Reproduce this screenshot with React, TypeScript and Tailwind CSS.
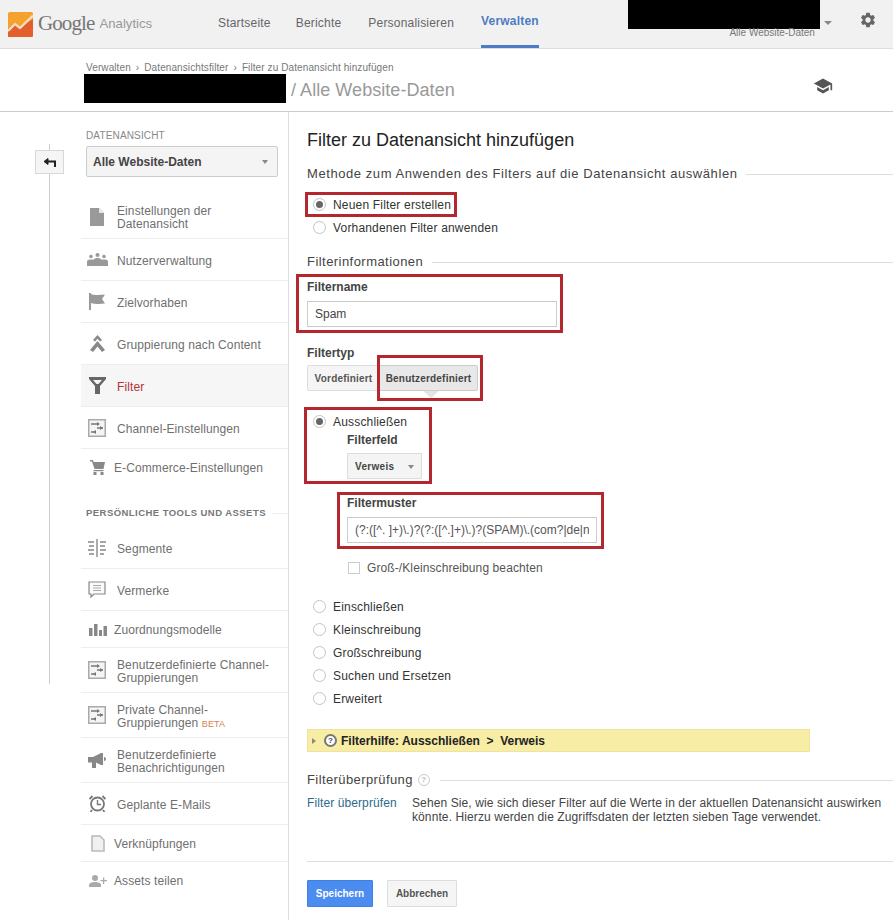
import type { ReactNode } from "react";
import { MdSettings, MdSchool } from "react-icons/md";

const FileIcon = () => (
  <svg width="14" height="18" viewBox="0 0 14 18" fill="#999">
    <path d="M0 0h9l5 5v13H0z" />
    <path d="M9 0v5h5z" fill="#e8e8e8" />
  </svg>
);

const PeopleIcon = () => (
  <svg width="21" height="13" viewBox="0 0 21 13" fill="#999">
    <circle cx="4" cy="3.500" r="1.800" />
    <circle cx="10.500" cy="2" r="2" />
    <circle cx="17" cy="3.500" r="1.800" />
    <path d="M0 13V8.500C0 7 2 6.500 4 6.500c.8 0 1.500.1 2.200.3C7 5.600 9 5 10.500 5s3.500.6 4.300 1.800c.7-.2 1.400-.3 2.200-.3 2 0 4 .5 4 2V13z" />
  </svg>
);

const FlagIcon = () => (
  <svg width="16" height="17" viewBox="0 0 16 17" fill="#999">
    <rect x="0" y="0" width="2" height="17" />
    <path d="M2 1c3 1.200 6 1.200 14 .5L13 6l3 4.500c-6 .8-10 .5-14-.5z" />
  </svg>
);

const MergeIcon = () => (
  <svg width="15" height="17" viewBox="0 0 15 17" fill="#888">
    <path d="M7.500 0L12 5l-2 1.500-2.500-2.800L5 6.500 3 5z" />
    <path d="M7.500 6L15 15l-3 2-4.500-5.500L3 17l-3-2z" />
  </svg>
);

const FunnelIcon = () => (
  <svg width="17" height="17" viewBox="0 0 17 17" fill="#666">
    <path fillRule="evenodd" d="M0 0h17v2l-6 7v8H6V9L0 2zm4 3l3.500 4h2L13 3z" />
  </svg>
);

const ChannelIcon = () => (
  <svg width="18" height="18" viewBox="0 0 18 18" fill="none">
    <rect x="0.750" y="0.750" width="16.500" height="16.500" fill="#f4f4f4" stroke="#aaa" strokeWidth="1.500" />
    <path d="M3 5h6M3 13h5M9 9h6" stroke="#777" strokeWidth="1.300" />
    <path d="M9 3l3 2-3 2zM12 7l3 2-3 2zM8 11l-3 2 3 2z" fill="#777" />
  </svg>
);

const CartIcon = () => (
  <svg width="15" height="15" viewBox="0 0 15 15" fill="#888">
    <path d="M0 0h3l.6 2H15l-1.500 7H4.500L2 1.500H0z" />
    <rect x="3.500" y="10" width="10" height="1.200" />
    <rect x="3.500" y="12" width="3" height="3" />
    <rect x="10.500" y="12" width="3" height="3" />
  </svg>
);

const SegmentIcon = () => (
  <svg width="18" height="18" viewBox="0 0 18 18" fill="none" stroke="#888" strokeWidth="1.400">
    <path d="M9 0v18" />
    <path d="M0 3h6M1 7h5M0 11h6M1 15h5M12 3h6M12 7h5M12 11h6M12 15h4" />
  </svg>
);

const CommentIcon = () => (
  <svg width="18" height="18" viewBox="0 0 18 18" fill="none">
    <path d="M1 1h16v12H6l-3 3v-3H1z" fill="#fafafa" stroke="#888" strokeWidth="1.200" />
    <path d="M5 4.500h8M5 7h8M5 9.500h8" stroke="#aaa" strokeWidth="1" />
  </svg>
);

const BarsIcon = () => (
  <svg width="18" height="14" viewBox="0 0 18 14" fill="#888">
    <rect x="0" y="6" width="3.500" height="8" />
    <rect x="5" y="2" width="3.500" height="12" />
    <rect x="10" y="8" width="3" height="6" />
    <rect x="14.500" y="4" width="3.500" height="10" />
  </svg>
);

const HornIcon = () => (
  <svg width="18" height="15" viewBox="0 0 18 15" fill="#888">
    <path d="M0 4h5l8-4h2v12h-2L8 9.500V15H4V9.500H0z" />
    <path d="M16 4c1.300 0 2 1 2 2s-.7 2-2 2z" />
  </svg>
);

const ClockIcon = () => (
  <svg width="17" height="17" viewBox="0 0 17 17" fill="none" stroke="#777">
    <circle cx="8.500" cy="9" r="6.500" strokeWidth="1.800" />
    <path d="M8.500 5v4.500H12" strokeWidth="1.400" />
    <path d="M0.500 4l3-3M16.500 4l-3-3M3 15l-1.500 2M14 15l1.500 2" strokeWidth="1.800" />
  </svg>
);

const PageIcon = () => (
  <svg width="14" height="17" viewBox="0 0 14 17" fill="#f0f0f0" stroke="#bbb" strokeWidth="1.600">
    <path d="M1 1h8l4 4v11H1z" />
  </svg>
);

const AddUserIcon = () => (
  <svg width="18" height="12" viewBox="0 0 18 12" fill="#aaa">
    <circle cx="6" cy="3" r="3" />
    <path d="M0 12v-2c0-2 3-3 6-3s6 1 6 3v2z" />
    <path d="M14 2.500h1.300v2.500H18v1.300h-2.700V9H14V6.300h-2.500V5H14z" />
  </svg>
);

const BackIcon = () => (
  <svg width="13" height="9" viewBox="0 0 13 9" fill="none" stroke="#222" strokeWidth="2">
    <path d="M12 9V3.500H3" />
    <path d="M5 0.500L1 3.500l4 3z" fill="#222" strokeWidth="1" />
  </svg>
);

const Logo = () => (
  <svg width="25" height="25" viewBox="0 0 25 25">
    <rect x="0" y="0" width="25" height="25" rx="1.500" fill="#f4a22d" />
    <path d="M0 25V17l7-6 5 4L25 7v16.500a1.500 1.500 0 0 1-1.500 1.500z" fill="#e2602c" />
    <path d="M0 19l7-7 5 4L25 3.500" fill="none" stroke="#f6dcc0" strokeWidth="2.400" />
  </svg>
);

const HelpDot = ({ light }: { light?: boolean }) => (
  <span
    className={
      light
        ? "flex h-[12px] w-[12px] items-center justify-center rounded-full border border-[#ccc] text-[8px] font-bold text-[#bbb]"
        : "flex h-[13px] w-[13px] items-center justify-center rounded-full border-2 border-[#777] bg-white text-[8px] font-bold text-[#444]"
    }
  >
    ?
  </span>
);

const Row = ({
  h,
  icon,
  border = true,
  narrow,
  active,
  children,
}: {
  h: string;
  icon: ReactNode;
  border?: boolean;
  narrow?: boolean;
  active?: boolean;
  children: ReactNode;
}) => (
  <div
    className={`flex items-center ${h} ${border ? "border-b border-[#eee]" : ""} ${active ? "bg-[#f6f6f6] text-[#b5323a]" : "text-[#6f6f6f]"}`}
  >
    <span className={`flex shrink-0 justify-center ${narrow ? "w-[33px]" : "w-[36px] pr-[4px]"}`}>{icon}</span>
    <span className={`text-[12px] leading-[13px] tracking-[0.1px] ${narrow ? "pt-[2px]" : "pt-[4px]"}`}>{children}</span>
  </div>
);

const Radio = ({ checked, label }: { checked?: boolean; label: string }) => (
  <div className="flex h-[23px] items-center pl-[6px] text-[12px] tracking-[0.18px] text-[#333]">
    <span className="flex h-[13px] w-[13px] items-center justify-center rounded-full border border-[#c4c4c4] bg-white">
      {checked && <span className="h-[7px] w-[7px] rounded-full bg-[#666]" />}
    </span>
    <span className="ml-[7px]">{label}</span>
  </div>
);

const RedBox = ({ className }: { className: string }) => (
  <div className={`pointer-events-none absolute border-[3px] border-[#b4272f] ${className}`} />
);

export default function App() {
  return (
    <div className="relative h-[920px] w-[893px] overflow-hidden bg-white font-['Liberation_Sans',Arial,sans-serif] text-[#333]">
      {/* header */}
      <header className="flex h-[49px] items-start border-b border-[#ddd] bg-[#f1f1f1]">
        <div className="flex h-[48px] w-[218px] items-center pl-[8px]">
          <Logo />
          <span className="ml-[5px] font-['Liberation_Serif',serif] text-[21px] tracking-[-0.9px] text-[#777]">Google</span>
          <span className="ml-[5px] text-[13.200px] text-[#999]">Analytics</span>
        </div>
        <nav className="flex h-[48px] gap-[27px] text-[12px] tracking-[0.2px] text-[#666]">
          <a className="-mr-[2px] flex items-center pb-[3px]">Startseite</a>
          <a className="flex items-center pb-[3px]">Berichte</a>
          <a className="flex items-center pb-[3px]">Personalisieren</a>
          <a className="flex items-center border-b-[3px] border-[#4d7cc4] pb-[3px] font-bold text-[#4d7cc4]">Verwalten</a>
        </nav>
        <div className="ml-[89px] w-[192px]">
          <div className="h-[29px] bg-black" />
          <div className="pr-[5px] pt-[1px] text-right text-[10px] leading-[6px] text-[#777]">Alle Website-Daten</div>
        </div>
        <span className="ml-[4px] mt-[21px] h-0 w-0 border-x-[4px] border-t-[4px] border-x-transparent border-t-[#888]" />
        <MdSettings className="ml-[27px] mt-[11px] text-[#666]" size={18} />
      </header>

      {/* breadcrumb */}
      <div className="flex h-[63px] border-b border-[#ccc] pl-[84px]">
        <div className="flex-1">
          <div className="mt-[13px] flex h-[10px] items-center gap-[5px] pl-[2px] text-[10px] tracking-[0.1px] text-[#777]">
            <span>Verwalten</span>
            <span>›</span>
            <span>Datenansichtsfilter</span>
            <span>›</span>
            <span>Filter zu Datenansicht hinzufügen</span>
          </div>
          <div className="flex items-center">
            <div className="h-[29px] w-[202px] bg-black" />
            <span className="ml-[5px] pt-[5px] text-[18px] tracking-[0.05px] text-[#999]">/ Alle Website-Daten</span>
          </div>
        </div>
        <MdSchool className="mr-[60px] mt-[27px] text-[#555]" size={20} />
      </div>

      <div className="flex">
        {/* back rail */}
        <div className="relative w-[81px] shrink-0">
          <div className="ml-[49px] mt-[32px] h-[540px] w-px bg-[#ccc]" />
          <button className="absolute left-[35px] top-[38px] flex h-[24px] w-[29px] items-center justify-center border border-[#d8d8d8] bg-[#f5f5f5]">
            <BackIcon />
          </button>
        </div>

        {/* sidebar */}
        <aside className="h-[808px] w-[208px] shrink-0 border-r border-[#ddd]">
          <div className="ml-[5px] mt-[18px] h-[12px] text-[10px] leading-[12px] tracking-[0.15px] text-[#888]">DATENANSICHT</div>
          <div className="ml-[5px] mt-[4px] flex h-[31px] w-[192px] items-center justify-between rounded-[2px] border border-[#ccc] bg-[#f4f4f4] pl-[6px] pr-[9px] text-[12px] font-bold text-[#444]">
            <span>Alle Website-Daten</span>
            <span className="h-0 w-0 border-x-[3.500px] border-t-[4px] border-x-transparent border-t-[#888]" />
          </div>
          <div className="mt-[18px]">
            <Row h="h-[44px]" icon={<FileIcon />}>
              <span className="-mt-[2px] block">
                Einstellungen der
                <br />
                Datenansicht
              </span>
            </Row>
            <Row h="h-[42px]" icon={<PeopleIcon />}>Nutzerverwaltung</Row>
            <Row h="h-[42px]" icon={<FlagIcon />}>Zielvorhaben</Row>
            <Row h="h-[42px]" icon={<MergeIcon />}>Gruppierung nach Content</Row>
            <Row h="h-[42px]" active icon={<FunnelIcon />}>Filter</Row>
            <Row h="h-[42px]" icon={<ChannelIcon />}>Channel-Einstellungen</Row>
            <Row h="h-[36px]" border={false} narrow icon={<CartIcon />}>E-Commerce-Einstellungen</Row>
            <div className="mt-[19px] flex h-[18px] items-center pl-[5px] text-[9.500px] font-bold tracking-[0.45px] text-[#777]">
              <span className="whitespace-nowrap">PERSÖNLICHE TOOLS UND ASSETS</span>
              <span className="ml-[6px] h-px flex-1 bg-[#eee]" />
            </div>
            <div className="mt-[5px]">
              <Row h="h-[42px]" icon={<SegmentIcon />}>Segmente</Row>
              <Row h="h-[42px]" icon={<CommentIcon />}>Vermerke</Row>
              <Row h="h-[37px]" narrow icon={<BarsIcon />}>Zuordnungsmodelle</Row>
              <Row h="h-[45px]" icon={<ChannelIcon />}>
                Benutzerdefinierte Channel-
                <br />
                Gruppierungen
              </Row>
              <Row h="h-[45px]" icon={<ChannelIcon />}>
                Private Channel-
                <br />
                Gruppierungen <span className="text-[9px] text-[#d9824a]">BETA</span>
              </Row>
              <Row h="h-[45px]" icon={<HornIcon />}>
                Benutzerdefinierte
                <br />
                Benachrichtigungen
              </Row>
              <Row h="h-[42px]" icon={<ClockIcon />}>Geplante E-Mails</Row>
              <Row h="h-[37px]" narrow icon={<PageIcon />}>Verknüpfungen</Row>
              <Row h="h-[37px]" border={false} narrow icon={<AddUserIcon />}>Assets teilen</Row>
            </div>
          </div>
        </aside>

        {/* main */}
        <main className="relative w-[604px] pl-[18px]">
          <h1 className="mt-[16px] text-[18px] leading-[24px] text-[#222]">Filter zu Datenansicht hinzufügen</h1>
          <div className="mt-[14px] flex h-[16px] items-center text-[13px] tracking-[0.57px] text-[#444]">
            <span className="whitespace-nowrap">Methode zum Anwenden des Filters auf die Datenansicht auswählen</span>
            <span className="ml-[9px] h-px flex-1 bg-[#ddd]" />
          </div>
          <div className="mt-[11px]">
            <Radio checked label="Neuen Filter erstellen" />
            <Radio label="Vorhandenen Filter anwenden" />
          </div>
          <div className="mt-[15px] flex h-[16px] items-center text-[13px] tracking-[0.45px] text-[#444]">
            <span>Filterinformationen</span>
            <span className="ml-[9px] h-px flex-1 bg-[#ddd]" />
          </div>
          <div className="mt-[9px] h-[16px] text-[12px] font-bold leading-[16px] text-[#444]">Filtername</div>
          <input
            readOnly
            value="Spam"
            className="mt-[6px] block h-[26px] w-[250px] border border-[#ccc] bg-white pl-[7px] text-[12px] text-[#444] outline-none"
          />

          <div className="mt-[18px] h-[16px] text-[12px] font-bold leading-[16px] text-[#444]">Filtertyp</div>
          <div className="mt-[4px] flex">
            <button className="h-[26px] w-[73px] rounded-l-[2px] border border-[#ddd] bg-[#f5f5f5] text-[10px] font-bold tracking-[0.2px] text-[#555]">
              Vordefiniert
            </button>
            <button className="relative h-[26px] w-[98px] rounded-r-[2px] border border-l-0 border-[#ccc] bg-[#e8e8e8] text-[10px] font-bold tracking-[0.2px] text-[#444]">
              Benutzerdefiniert
              <span className="absolute left-[43px] top-[25px] h-0 w-0 border-x-[8px] border-t-[7px] border-x-transparent border-t-[#e4e4e4]" />
            </button>
          </div>

          <div className="mt-[19px]">
            <Radio checked label="Ausschließen" />
          </div>
          <div className="ml-[40px] h-[14px] text-[12px] font-bold leading-[14px] text-[#444]">Filterfeld</div>
          <div className="ml-[40px] mt-[6px] flex h-[26px] w-[75px] items-center justify-between border border-[#ddd] bg-[#f4f4f4] pl-[7px] pr-[7px] text-[10px] font-bold tracking-[0.3px] text-[#444]">
            <span>Verweis</span>
            <span className="mt-[2px] h-0 w-0 border-x-[3.500px] border-t-[4px] border-x-transparent border-t-[#888]" />
          </div>
          <div className="ml-[40px] mt-[16px] h-[16px] text-[12px] font-bold leading-[16px] text-[#444]">Filtermuster</div>
          <input
            readOnly
            value="(?:([^. ]+)\.)?(?:([^.]+)\.)?(SPAM)\.(com?|de|net|org)"
            className="ml-[40px] mt-[6px] block h-[26px] w-[250px] border border-[#ccc] bg-white px-[7px] text-[12px] text-[#555] outline-none"
          />
          <div className="ml-[41px] mt-[17px] flex h-[16px] items-center text-[12px] tracking-[0.1px] text-[#555]">
            <span className="h-[12px] w-[12px] border border-[#ccc] bg-white" />
            <span className="ml-[7px]">Groß-/Kleinschreibung beachten</span>
          </div>

          <div className="mt-[19px]">
            <Radio label="Einschließen" />
            <Radio label="Kleinschreibung" />
            <Radio label="Großschreibung" />
            <Radio label="Suchen und Ersetzen" />
            <Radio label="Erweitert" />
          </div>

          <div className="mt-[19px] flex h-[23px] w-[503px] items-center border border-[#eee3a0] bg-[#f7eda5] pl-[4px] text-[12px] font-bold text-[#222]">
            <span className="h-0 w-0 border-y-[3px] border-l-[4px] border-y-transparent border-l-[#888]" />
            <span className="ml-[8px] mr-[4px]">
              <HelpDot />
            </span>
            <span>Filterhilfe: Ausschließen &nbsp;&gt;&nbsp; Verweis</span>
          </div>

          <div className="mt-[20px] flex h-[16px] items-center text-[13px] tracking-[0.4px] text-[#444]">
            <span>Filterüberprüfung</span>
            <span className="ml-[5px]">
              <HelpDot light />
            </span>
            <span className="ml-[10px] h-px flex-1 bg-[#ddd]" />
          </div>
          <div className="mt-[8px] flex text-[12px] leading-[14px] tracking-[0.1px]">
            <a className="w-[105px] shrink-0 text-[#2c6a8c]">Filter überprüfen</a>
            <p className="whitespace-nowrap text-[#444]">
              Sehen Sie, wie sich dieser Filter auf die Werte in der aktuellen Datenansicht auswirken
              <br />
              könnte. Hierzu werden die Zugriffsdaten der letzten sieben Tage verwendet.
            </p>
          </div>
          <div className="mt-[37px] h-px bg-[#ddd]" />
          <div className="mt-[18px] flex gap-[14px]">
            <button className="h-[27px] w-[66px] rounded-[1px] border border-[#3f7fe0] bg-[#4a8cf0] text-[10px] font-bold text-white">
              Speichern
            </button>
            <button className="h-[27px] w-[70px] rounded-[1px] border border-[#ddd] bg-[#f5f5f5] text-[10px] font-bold text-[#555]">
              Abbrechen
            </button>
          </div>
        </main>
      </div>

      {/* annotations drawn on top of the screenshot */}
      <RedBox className="left-[305px] top-[192px] h-[25px] w-[152px]" />
      <RedBox className="left-[296px] top-[274px] h-[59px] w-[267px]" />
      <RedBox className="left-[377px] top-[355px] h-[46px] w-[106px]" />
      <RedBox className="left-[304px] top-[407px] h-[77px] w-[128px]" />
      <RedBox className="left-[337px] top-[492px] h-[57px] w-[267px]" />
    </div>
  );
}
